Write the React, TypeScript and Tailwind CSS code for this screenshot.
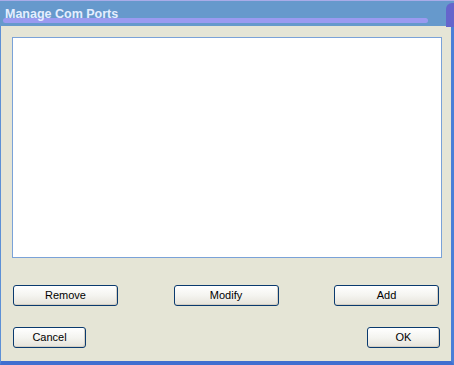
import React from "react";

function XpButton({ label, width }: { label: string; width: string }) {
  return (
    <button
      className={`${width} h-[21px] rounded-[3px] border border-[#0a3a6e] bg-gradient-to-b from-[#ffffff] via-[#f4f4f0] to-[#e6e3da] shadow-[inset_-1px_-1px_0_#d4cfc4] text-[11px] leading-none text-black flex items-center justify-center`}
    >
      {label}
    </button>
  );
}

export default function App() {
  return (
    <div
      className="w-[454px] h-[365px] flex flex-col bg-[#e5e5d6] overflow-hidden"
      style={{ fontFamily: '"Liberation Sans", Arial, sans-serif' }}
    >
      {/* title bar */}
      <div className="relative h-[26px] shrink-0 bg-[#6699cc] border-t border-[#a9ace8]">
        <div className="absolute left-[3px] top-[17px] w-[425px] h-[5px] rounded-full bg-[#9a9af0]" />
        <div className="absolute right-0 top-[2px] w-[8px] h-[24px] rounded-tl-[6px] bg-[#6565cc]" />
        <span className="relative ml-[5px] block pt-[6px] text-[12.5px] font-bold leading-[14px] text-[#e4eeff]">
          Manage Com Ports
        </span>
      </div>

      {/* dialog body */}
      <div className="flex-1 flex flex-col border-l border-[#5d90d6] border-r-[3px] border-r-[#4a7fd8] border-b-[4px] border-b-[#3f6fd0]">
        <div className="ml-[11px] mt-[11px] w-[430px] h-[221px] bg-white border border-[#7aa2d8]" />

        <div className="flex justify-between ml-[12px] mr-[12px] mt-[27px]">
          <XpButton label="Remove" width="w-[105px]" />
          <XpButton label="Modify" width="w-[105px]" />
          <XpButton label="Add" width="w-[105px]" />
        </div>

        <div className="flex justify-between ml-[12px] mr-[11px] mt-[21px]">
          <XpButton label="Cancel" width="w-[73px]" />
          <XpButton label="OK" width="w-[73px]" />
        </div>
      </div>
    </div>
  );
}
